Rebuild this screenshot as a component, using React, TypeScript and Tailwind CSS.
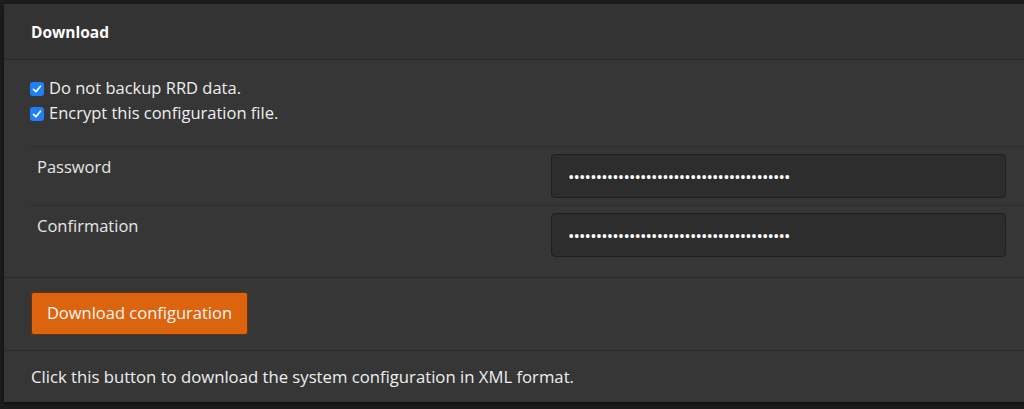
import { useState } from 'react';

const FONT = { fontFamily: '"Open Sans", "Noto Sans", sans-serif' };

function Check({ label, checked, onToggle }: { label: string; checked: boolean; onToggle: () => void }) {
  return (
    <label className="flex h-[25px] cursor-pointer items-center gap-[5px]">
      <span
        onClick={onToggle}
        className={`flex h-[14px] w-[14px] items-center justify-center rounded-[3px] ${
          checked ? 'bg-[#1f7ff6]' : 'border border-[#888] bg-[#2c2c2c]'
        }`}
      >
        {checked && (
          <svg viewBox="0 0 14 14" className="h-[12px] w-[12px]">
            <path d="M3 7.4 5.8 10.2 11 3.8" fill="none" stroke="white" strokeWidth="2" strokeLinecap="round" strokeLinejoin="round" />
          </svg>
        )}
      </span>
      <span className="text-[16.5px] text-[#eeeeee]">{label}</span>
    </label>
  );
}

function PasswordRow({ label, value, last }: { label: string; value: string; last?: boolean }) {
  return (
    <div className={`flex h-[59px] items-start ${last ? '' : 'border-b border-[#2c2c2c]'}`}>
      <div className="w-[521px] pl-[7px] pt-[8px] text-[16.5px] text-[#e6e6e6]">{label}</div>
      <input
        type="password"
        readOnly
        value={value}
        className="mt-[7px] h-[44px] w-[455px] rounded-[4px] border border-[#1f1f1f] bg-[#2d2d2d] px-[16px] text-[17px] tracking-[-0.85px] text-white outline-none"
      />
    </div>
  );
}

export default function App() {
  const [noRrd, setNoRrd] = useState(true);
  const [encrypt, setEncrypt] = useState(true);
  const secret = 'x'.repeat(40);

  return (
    <div className="h-[409px] w-[1024px] bg-[#1c1c1c] pl-[4px] pt-[4px]" style={FONT}>
      <div className="h-[398px] bg-[#363636] shadow-[0_2px_4px_rgba(0,0,0,0.5)]">
        <div className="flex h-[56px] items-center border-b border-[#2a2a2a] bg-[#333333] pl-[27px] pt-[2px] text-[15.5px] font-bold text-white">
          Download
        </div>
        <div className="pl-[26px] pt-[16px]">
          <Check label="Do not backup RRD data." checked={noRrd} onToggle={() => setNoRrd(!noRrd)} />
          <Check label="Encrypt this configuration file." checked={encrypt} onToggle={() => setEncrypt(!encrypt)} />
        </div>
        <div className="ml-[26px] mt-[20px] border-t border-[#2c2c2c]">
          <PasswordRow label="Password" value={secret} />
          <PasswordRow label="Confirmation" value={secret} last />
        </div>
        <div className="mt-[12px] border-t border-[#2a2a2a] pl-[27px] pt-[14px] pb-[15px]">
          <button
            type="button"
            className="h-[43px] w-[217px] rounded-[3px] border border-[#6e3208] bg-[#dd640f] text-[16.5px] text-[#f5f5f5]"
          >
            Download configuration
          </button>
        </div>
        <div className="flex h-[52px] items-center border-t border-[#2a2a2a] pl-[27px] text-[16.7px] text-[#eeeeee]">
          Click this button to download the system configuration in XML format.
        </div>
      </div>
    </div>
  );
}
